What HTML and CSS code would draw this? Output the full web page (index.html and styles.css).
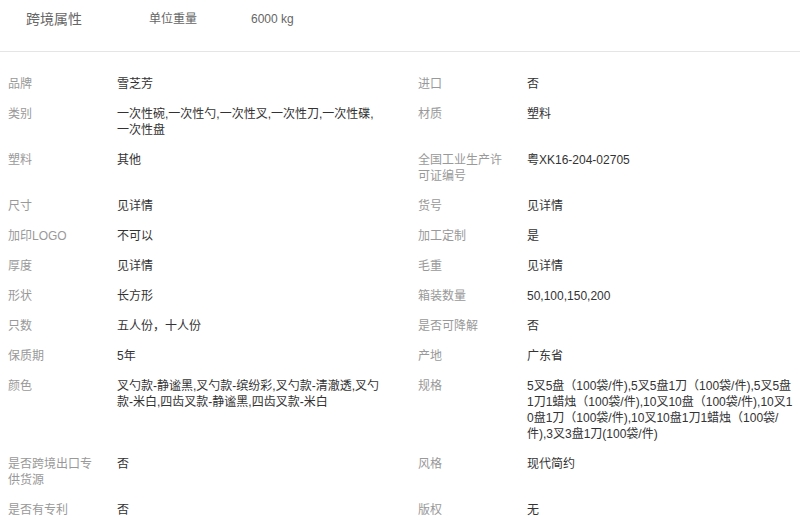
FILE: index.html
```html
<!DOCTYPE html>
<html lang="zh-CN">
<head>
<meta charset="utf-8">
<title>商品属性</title>
<link rel="stylesheet" href="styles.css">
</head>
<body>
<div class="attr-header">
  <span class="attr-title">跨境属性</span>
  <span class="attr-hk">单位重量</span>
  <span class="attr-hv">6000 kg</span>
</div>
<div class="attr-list">
  <div class="row">
    <div class="item"><div class="label">品牌</div><div class="value">雪芝芳</div></div>
    <div class="item"><div class="label">进口</div><div class="value">否</div></div>
  </div>
  <div class="row">
    <div class="item"><div class="label">类别</div><div class="value">一次性碗,一次性勺,一次性叉,一次性刀,一次性碟,<br>一次性盘</div></div>
    <div class="item"><div class="label">材质</div><div class="value">塑料</div></div>
  </div>
  <div class="row">
    <div class="item"><div class="label">塑料</div><div class="value">其他</div></div>
    <div class="item"><div class="label">全国工业生产许可证编号</div><div class="value">粤XK16-204-02705</div></div>
  </div>
  <div class="row">
    <div class="item"><div class="label">尺寸</div><div class="value">见详情</div></div>
    <div class="item"><div class="label">货号</div><div class="value">见详情</div></div>
  </div>
  <div class="row">
    <div class="item"><div class="label">加印LOGO</div><div class="value">不可以</div></div>
    <div class="item"><div class="label">加工定制</div><div class="value">是</div></div>
  </div>
  <div class="row">
    <div class="item"><div class="label">厚度</div><div class="value">见详情</div></div>
    <div class="item"><div class="label">毛重</div><div class="value">见详情</div></div>
  </div>
  <div class="row">
    <div class="item"><div class="label">形状</div><div class="value">长方形</div></div>
    <div class="item"><div class="label">箱装数量</div><div class="value">50,100,150,200</div></div>
  </div>
  <div class="row">
    <div class="item"><div class="label">只数</div><div class="value">五人份，十人份</div></div>
    <div class="item"><div class="label">是否可降解</div><div class="value">否</div></div>
  </div>
  <div class="row">
    <div class="item"><div class="label">保质期</div><div class="value">5年</div></div>
    <div class="item"><div class="label">产地</div><div class="value">广东省</div></div>
  </div>
  <div class="row">
    <div class="item"><div class="label">颜色</div><div class="value">叉勺款-静谧黑,叉勺款-缤纷彩,叉勺款-清澈透,叉勺<br>款-米白,四齿叉款-静谧黑,四齿叉款-米白</div></div>
    <div class="item"><div class="label">规格</div><div class="value">5叉5盘（100袋/件),5叉5盘1刀（100袋/件),5叉5盘<br>1刀1蜡烛（100袋/件),10叉10盘（100袋/件),10叉1<br>0盘1刀（100袋/件),10叉10盘1刀1蜡烛（100袋/<br>件),3叉3盘1刀(100袋/件)</div></div>
  </div>
  <div class="row">
    <div class="item"><div class="label">是否跨境出口专供货源</div><div class="value">否</div></div>
    <div class="item"><div class="label">风格</div><div class="value">现代简约</div></div>
  </div>
  <div class="row">
    <div class="item"><div class="label">是否有专利</div><div class="value">否</div></div>
    <div class="item"><div class="label">版权</div><div class="value">无</div></div>
  </div>
</div>
</body>
</html>
```
FILE: styles.css
```css
html, body {
  margin: 0;
  padding: 0;
  background: #ffffff;
}
body {
  font-family: "Liberation Sans", "Noto Sans CJK SC", sans-serif;
  font-size: 12px;
  color: #333333;
  width: 800px;
  overflow: hidden;
}
.attr-header {
  display: flex;
  align-items: center;
  height: 51px;
  box-sizing: content-box;
  padding-left: 26px;
  border-bottom: 1px solid #e5e5e5;
}
.attr-header > span {
  line-height: 18px;
  margin-top: -13px;
  color: #666666;
}
.attr-title {
  font-size: 14px;
  width: 123px;
}
.attr-hk {
  width: 102px;
}
.attr-list {
  padding: 17px 0 0 8px;
}
.row {
  display: flex;
  gap: 21px;
}
.item {
  display: grid;
  grid-template-columns: 109px 280px;
  padding: 7px 0;
  line-height: 16px;
}
.label {
  color: #999999;
  padding-right: 19px;
}
.value {
  color: #333333;
  white-space: nowrap;
}
```
